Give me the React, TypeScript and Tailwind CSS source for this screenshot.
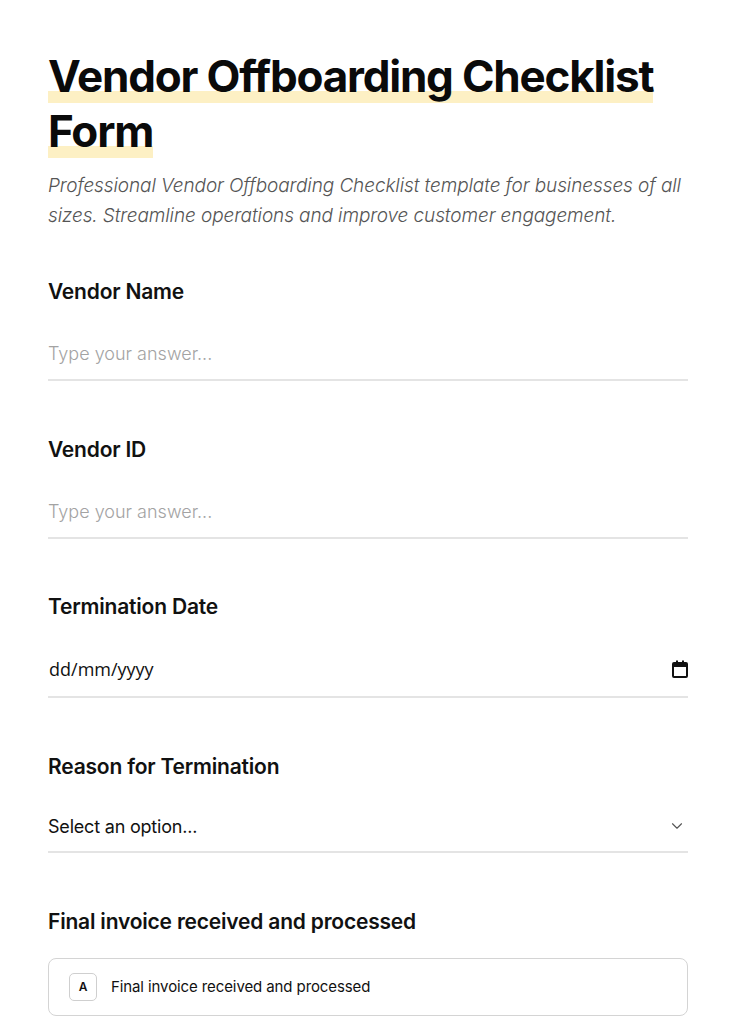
import { ChevronDown } from "lucide-react";

const font = { fontFamily: "Inter, 'Noto Sans', sans-serif" };

function Label({ children }: { children: string }) {
  return (
    <h2 className="text-[21px] font-semibold leading-[28px] tracking-[-0.2px] text-[#111]">{children}</h2>
  );
}

function TextField({ label, className = "" }: { label: string; className?: string }) {
  return (
    <div className={"flex flex-col " + className}>
      <Label>{label}</Label>
      <input
        placeholder="Type your answer..."
        className="mt-[31px] h-[44px] w-full border-b-2 border-[#e4e4e4] bg-transparent pb-[10px] text-[18px] leading-[32px] font-light text-[#111] outline-none placeholder:text-[#a3a3a3]"
      />
    </div>
  );
}

function CalendarIcon() {
  return (
    <svg width="16" height="18" viewBox="0 0 16 18" fill="none">
      <rect x="1" y="3" width="14" height="14" rx="1" stroke="#111" strokeWidth="2" />
      <rect x="1" y="3" width="14" height="4" fill="#111" />
      <rect x="4" y="0.5" width="2" height="3" fill="#111" />
      <rect x="10" y="0.5" width="2" height="3" fill="#111" />
    </svg>
  );
}

export default function App() {
  return (
    <div className="min-h-screen bg-white" style={font}>
      <main className="px-12 pt-[49px] pb-12">
        <h1 className="text-[44px] font-bold leading-[55px] tracking-[-1.2px] text-[#0a0a0a]">
          <span className="box-decoration-clone bg-[linear-gradient(to_top,#fdf0c4_0,#fdf0c4_12px,transparent_12px)]">
            Vendor Offboarding Checklist Form
          </span>
        </h1>
        <p className="mt-[12px] text-[19px] font-light italic leading-[30px] tracking-[-0.1px] text-[#555]">
          Professional Vendor Offboarding Checklist template for businesses of all sizes. Streamline operations and improve customer engagement.
        </p>

        <TextField label="Vendor Name" className="mt-[47px]" />
        <TextField label="Vendor ID" className="mt-[55px]" />

        <div className="mt-[54px] flex flex-col">
          <Label>Termination Date</Label>
          <div className="mt-[33px] flex h-[44px] items-center justify-between border-b-2 border-[#e4e4e4] pb-[12px]">
            <span className="pl-[1px] text-[18px] text-[#111]" style={{ fontFamily: "'Open Sans', sans-serif" }}>
              dd/mm/yyyy
            </span>
            <CalendarIcon />
          </div>
        </div>

        <div className="mt-[55px] flex flex-col">
          <Label>Reason for Termination</Label>
          <div className="mt-[28px] flex h-[44px] items-center justify-between border-b-2 border-[#e4e4e4] pb-[8px]">
            <span className="text-[18px] tracking-[-0.2px] text-[#111]">Select an option...</span>
            <ChevronDown className="mr-[2px] h-[18px] w-[18px] text-[#555]" strokeWidth={1.5} />
          </div>
        </div>

        <div className="mt-[55px] flex flex-col">
          <Label>Final invoice received and processed</Label>
          <div className="mt-[22px] flex h-[58px] items-center gap-[14px] rounded-[8px] border border-[#d4d4d4] px-[20px]">
            <span className="flex h-[28px] w-[28px] items-center justify-center rounded-[5px] border border-[#cfcfcf] text-[12px] font-semibold text-[#111]">
              A
            </span>
            <span className="text-[15px] tracking-[-0.1px] text-[#111]">Final invoice received and processed</span>
          </div>
        </div>
      </main>
    </div>
  );
}
